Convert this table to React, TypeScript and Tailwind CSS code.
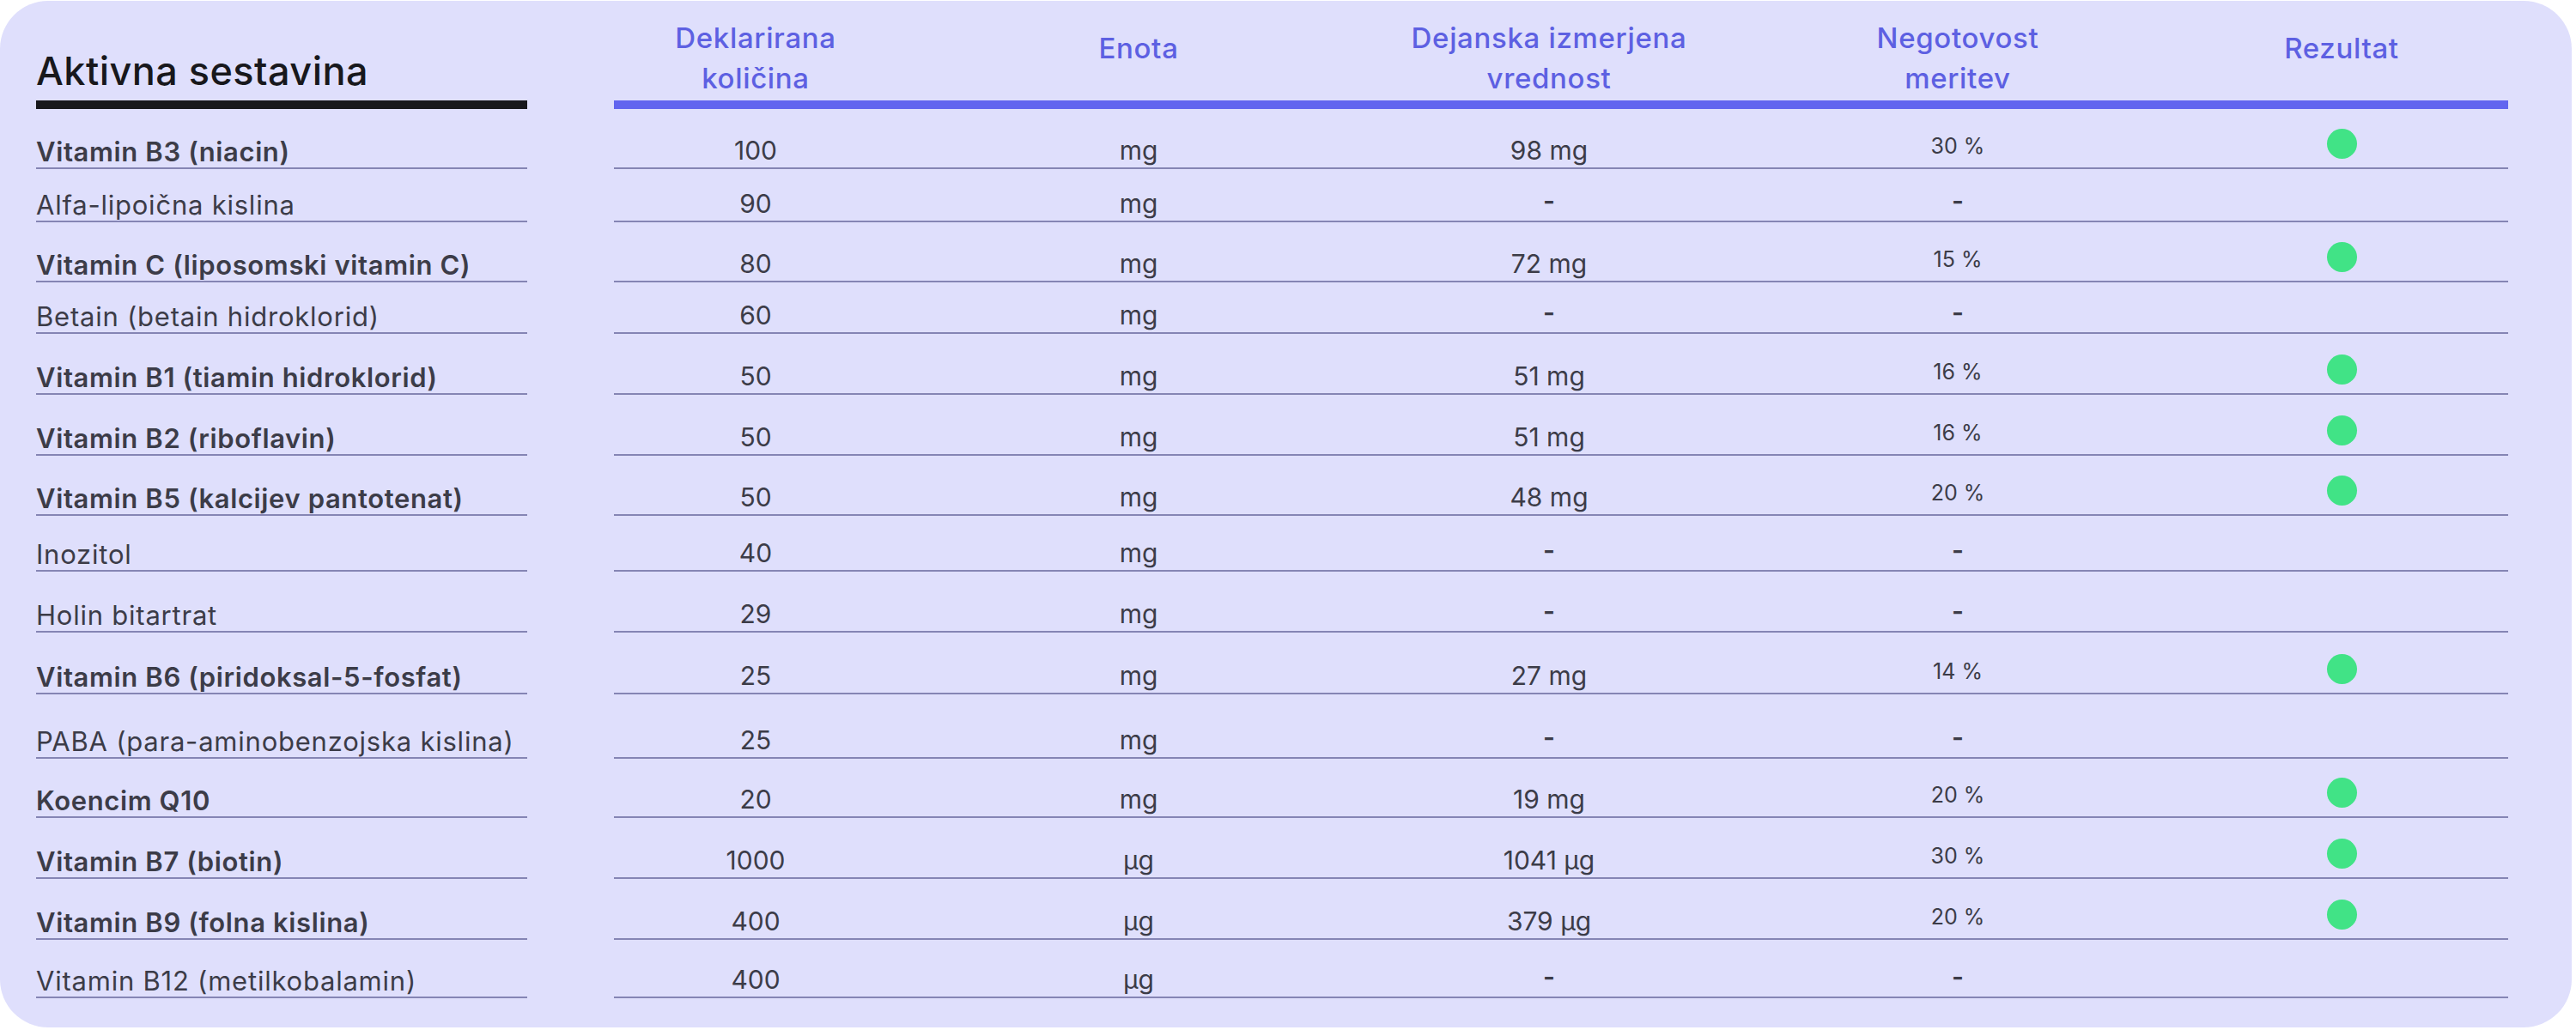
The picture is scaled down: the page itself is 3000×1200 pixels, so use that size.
import React from "react";

type Row = {
  name: string;
  bold: boolean;
  d: string;
  u: string;
  m: string;
  n: string;
  ok: boolean;
  h: string;
};

const rows: Row[] = [
  { name: "Vitamin B3 (niacin)", bold: true, d: "100", u: "mg", m: "98 mg", n: "30 %", ok: true, h: "h-[70px]" },
  { name: "Alfa-lipoična kislina", bold: false, d: "90", u: "mg", m: "-", n: "-", ok: false, h: "h-[62px]" },
  { name: "Vitamin C (liposomski vitamin C)", bold: true, d: "80", u: "mg", m: "72 mg", n: "15 %", ok: true, h: "h-[70px]" },
  { name: "Betain (betain hidroklorid)", bold: false, d: "60", u: "mg", m: "-", n: "-", ok: false, h: "h-[60px]" },
  { name: "Vitamin B1 (tiamin hidroklorid)", bold: true, d: "50", u: "mg", m: "51 mg", n: "16 %", ok: true, h: "h-[71px]" },
  { name: "Vitamin B2 (riboflavin)", bold: true, d: "50", u: "mg", m: "51 mg", n: "16 %", ok: true, h: "h-[71px]" },
  { name: "Vitamin B5 (kalcijev pantotenat)", bold: true, d: "50", u: "mg", m: "48 mg", n: "20 %", ok: true, h: "h-[70px]" },
  { name: "Inozitol", bold: false, d: "40", u: "mg", m: "-", n: "-", ok: false, h: "h-[65px]" },
  { name: "Holin bitartrat", bold: false, d: "29", u: "mg", m: "-", n: "-", ok: false, h: "h-[71px]" },
  { name: "Vitamin B6 (piridoksal-5-fosfat)", bold: true, d: "25", u: "mg", m: "27 mg", n: "14 %", ok: true, h: "h-[72px]" },
  { name: "PABA (para-aminobenzojska kislina)", bold: false, d: "25", u: "mg", m: "-", n: "-", ok: false, h: "h-[75px]" },
  { name: "Koencim Q10", bold: true, d: "20", u: "mg", m: "19 mg", n: "20 %", ok: true, h: "h-[69px]" },
  { name: "Vitamin B7 (biotin)", bold: true, d: "1000", u: "µg", m: "1041 µg", n: "30 %", ok: true, h: "h-[71px]" },
  { name: "Vitamin B9 (folna kislina)", bold: true, d: "400", u: "µg", m: "379 µg", n: "20 %", ok: true, h: "h-[71px]" },
  { name: "Vitamin B12 (metilkobalamin)", bold: false, d: "400", u: "µg", m: "-", n: "-", ok: false, h: "h-[68px]" },
];

function Value({ v, w }: { v: string; w: string }) {
  const dash = v === "-";
  return (
    <div className={`${w} flex items-end justify-center ${dash ? "pb-[8px]" : "pb-[5px]"}`}>
      <span className={`text-[30px] leading-none ${dash ? "font-semibold" : ""}`}>{v}</span>
    </div>
  );
}

export default function App() {
  return (
    <div className="w-[3000px] h-[1200px] bg-white font-[Inter,sans-serif] text-[#3c3c48]">
      <div className="mt-[1px] w-[2995px] h-[1196px] rounded-[56px] bg-[#dfdffc] pl-[42px]">
        {/* header */}
        <div className="flex h-[116px]">
          <div className="w-[572px] pt-[59px]">
            <h1 className="text-[45px] leading-none font-medium tracking-[0.01em] text-[#18181c]">Aktivna sestavina</h1>
          </div>
          <div className="w-[101px]" />
          <div className="w-[2206px] flex text-[33px] leading-[47px] font-medium tracking-[0.02em] text-[#5d60e2] text-center">
            <div className="w-[330px] pt-[20px]">
              Deklarirana
              <br />
              količina
            </div>
            <div className="w-[562px] pt-[32px]">Enota</div>
            <div className="w-[394px] pt-[20px]">
              Dejanska izmerjena
              <br />
              vrednost
            </div>
            <div className="w-[558px] pt-[20px]">
              Negotovost
              <br />
              meritev
            </div>
            <div className="w-[362px] pr-[26px] pt-[32px]">Rezultat</div>
          </div>
        </div>
        <div className="flex h-[10px]">
          <div className="w-[572px] bg-[#18181c]" />
          <div className="w-[101px]" />
          <div className="w-[2206px] bg-[#6265ef]" />
        </div>
        {/* rows */}
        {rows.map((r) => (
          <div key={r.name} className={`flex ${r.h}`}>
            <div className="w-[572px] flex items-end border-b-2 border-[#8585b4] pb-[3px]">
              <span
                className={`text-[31px] leading-none ${
                  r.bold ? "font-semibold tracking-[0.02em]" : "font-normal tracking-[0.025em]"
                }`}
              >
                {r.name}
              </span>
            </div>
            <div className="w-[101px]" />
            <div className="w-[2206px] flex border-b-2 border-[#8585b4]">
              <Value v={r.d} w="w-[330px]" />
              <Value v={r.u} w="w-[562px]" />
              <Value v={r.m} w="w-[394px]" />
              <div
                className={`w-[558px] flex items-end justify-center ${
                  r.n === "-" ? "pb-[8px]" : "pb-[12px]"
                }`}
              >
                <span className={`${r.n === "-" ? "text-[30px] font-semibold" : "text-[25px]"} leading-none`}>{r.n}</span>
              </div>
              <div className="w-[362px] pr-[26px] flex items-end justify-center pb-[10px]">
                {r.ok && <div className="w-[35px] h-[35px] rounded-full bg-[#41e386]" />}
              </div>
            </div>
          </div>
        ))}
      </div>
    </div>
  );
}
